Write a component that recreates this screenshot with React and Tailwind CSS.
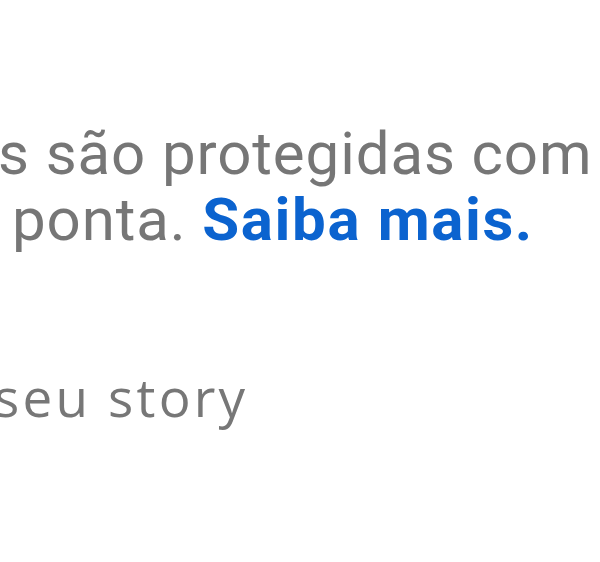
import React from 'react';

const App = () => {
  return (
    <div className="w-[600px] h-[562px] bg-white overflow-hidden relative">
      {/* Privacy notice */}
      <div className="pt-[121px] font-['Roboto',sans-serif] text-[60px] leading-[66px] tracking-[0.9px] text-[#767676] whitespace-nowrap">
        <p className="-ml-[2px]">s são protegidas com</p>
        <p className="ml-[12px]">
          ponta. <span className="font-bold tracking-[1.6px] text-[#0b63cf]">Saiba mais.</span>
        </p>
      </div>

      {/* Story row */}
      <div className="mt-[112px] font-['Open_Sans',sans-serif] font-medium text-[53px] leading-[64px] tracking-[3.2px] text-[#777777] whitespace-nowrap">
        <p className="-ml-[6px]">seu story</p>
      </div>
    </div>
  );
};

export default App;
